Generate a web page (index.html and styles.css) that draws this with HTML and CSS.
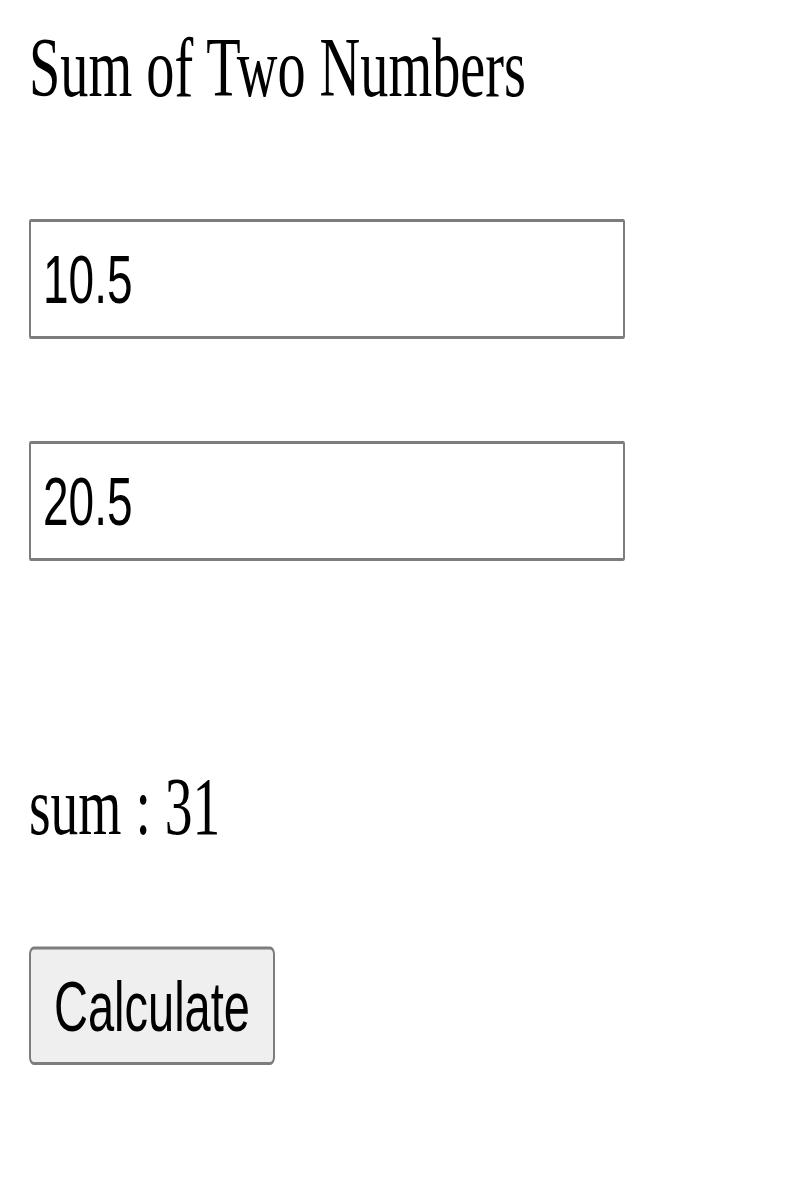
FILE: index.html
```html
<!DOCTYPE html>
<html lang="en">
<head>
<meta charset="utf-8">
<title>Sum of Two Numbers</title>
<link rel="stylesheet" href="styles.css">
</head>
<body>
<div class="page">
  <h1 class="title">Sum of Two Numbers</h1>
  <input class="field" type="text" value="10.5">
  <input class="field field-second" type="text" value="20.5">
  <p class="result">sum : 31</p>
  <button class="calc" type="button">Calculate</button>
</div>
</body>
</html>
```

FILE: styles.css
```css
html, body {
  margin: 0;
  padding: 0;
  background: #ffffff;
}

body {
  min-height: 1200px;
}

.page {
  display: flex;
  flex-direction: column;
  align-items: flex-start;
  padding: 13px 0 0 29px;
  transform: scaleY(1.5);
  transform-origin: 0 0;
  color: #000000;
}

.title {
  margin: 0;
  font-family: "Liberation Serif", "Times New Roman", serif;
  font-size: 56.3px;
  font-weight: normal;
  line-height: normal;
}

.field {
  box-sizing: border-box;
  flex: none;
  width: 596px;
  height: 80px;
  margin: 69px 0 0 0;
  padding: 0 12px;
  border: 2px solid #7d7d7d;
  border-radius: 2px;
  background: #ffffff;
  font-family: "Liberation Sans", Arial, sans-serif;
  font-size: 46px;
  color: #000000;
  outline: none;
}

.field-second {
  margin-top: 68px;
}

.result {
  flex: none;
  margin: 132px 0 0 0;
  font-family: "Liberation Serif", "Times New Roman", serif;
  font-size: 55.5px;
  line-height: normal;
}

.calc {
  flex: none;
  box-sizing: border-box;
  width: 246px;
  height: 79px;
  margin: 61.5px 0 0 0;
  padding: 0 20px;
  border: 2px solid #7d7d7d;
  border-radius: 5px;
  background: #efefef;
  font-family: "Liberation Sans", Arial, sans-serif;
  font-size: 47px;
  color: #000000;
}
```
